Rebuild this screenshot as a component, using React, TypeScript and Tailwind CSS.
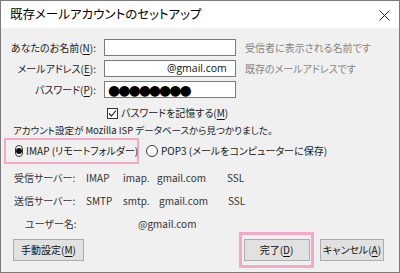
import React from 'react';

const Underline: React.FC<{ ch: string }> = ({ ch }) => <span className="underline underline-offset-2">{ch}</span>;

const Button: React.FC<{ className?: string; children: React.ReactNode }> = ({ className = '', children }) => (
  <div
    className={`h-[22px] flex items-center justify-center bg-[#e1e1e1] border border-[#adadad] text-[10px] text-[#111] whitespace-nowrap ${className}`}
  >
    {children}
  </div>
);

export default function App() {
  return (
    <div className="w-[400px] h-[273px] bg-[#f0f0f0] border border-[#7a7a7a] flex flex-col font-['Noto_Sans_CJK_JP',sans-serif] text-[10px] text-[#1a1a1a] [font-feature-settings:'palt'] leading-none overflow-hidden whitespace-nowrap">
      {/* Title bar */}
      <div className="h-[27px] bg-white flex items-center justify-between pl-[9px] pr-[9px] shrink-0">
        <span className="text-[12.5px] text-[#000] leading-none">既存メールアカウントのセットアップ</span>
        <svg width="11" height="11" viewBox="0 0 11 11" className="mt-[1px]">
          <path d="M0.5 0.5L10.5 10.5M10.5 0.5L0.5 10.5" stroke="#222" strokeWidth="1" />
        </svg>
      </div>

      {/* Form */}
      <div className="grid grid-cols-[95px_132px_auto] grid-rows-[17px_17px_17px] gap-x-[8px] gap-y-[4px] mt-[11px] items-center">
        <div className="text-right">あなたのお名前(<Underline ch="N" />):</div>
        <div className="h-[17px] bg-white border border-[#7a7a7a]" />
        <div className="pl-[1px] text-[#858585]">受信者に表示される名前です</div>

        <div className="text-right">メールアドレス(<Underline ch="E" />):</div>
        <div className="h-[17px] bg-white border border-[#7a7a7a] flex items-center pl-[62px] text-[10.5px] text-[#111] font-['Open_Sans',sans-serif]">
          @gmail.com
        </div>
        <div className="pl-[1px] text-[#858585]">既存のメールアドレスです</div>

        <div className="text-right">パスワード(<Underline ch="P" />):</div>
        <div className="h-[17px] bg-white border border-[#7a7a7a] flex items-center pl-[3px] text-[14px] tracking-[-2px] text-black font-['DejaVu_Sans',sans-serif]">
          ●●●●●●●●
        </div>
        <div />
      </div>

      {/* Remember password */}
      <div className="flex items-center ml-[106px] mt-[9px] h-[12px]">
        <div className="w-[11px] h-[11px] border border-[#333] bg-white flex items-center justify-center">
          <svg width="9" height="9" viewBox="0 0 9 9">
            <path d="M1 4.5L3.5 7L8 1.5" stroke="#111" strokeWidth="1.1" fill="none" />
          </svg>
        </div>
        <span className="ml-[3px]">パスワードを記憶する(<Underline ch="M" />)</span>
      </div>

      {/* Info */}
      <div className="ml-[12px] mt-[7px] h-[10px] text-[9.5px]">
        アカウント設定が Mozilla ISP データベースから見つかりました。
      </div>

      {/* Protocol radio */}
      <div className="flex items-center mt-[2px] h-[26px]">
        <div className="ml-[3px] h-[26px] w-[135px] border-2 border-[#f5a9c9] flex items-center pl-[9px]">
          <div className="w-[12px] h-[12px] rounded-full border border-[#333] bg-white flex items-center justify-center">
            <div className="w-[6px] h-[6px] rounded-full bg-[#111]" />
          </div>
          <span className="ml-[3px]">IMAP (リモートフォルダー)</span>
        </div>
        <div className="ml-[7px] flex items-center">
          <div className="w-[12px] h-[12px] rounded-full border border-[#333] bg-white" />
          <span className="ml-[3px]">POP3 (メールをコンピューターに保存)</span>
        </div>
      </div>

      {/* Servers */}
      <div className="flex flex-col gap-[13px] mt-[9px] text-[#333]">
        <div className="flex items-center h-[10px]">
          <span className="ml-[13px] w-[72px]">受信サーバー:</span>
          <span className="w-[37px]">IMAP</span>
          <span className="w-[34px]">imap.</span>
          <span className="w-[70px]">gmail.com</span>
          <span>SSL</span>
        </div>
        <div className="flex items-center h-[10px]">
          <span className="ml-[13px] w-[72px]">送信サーバー:</span>
          <span className="w-[37px]">SMTP</span>
          <span className="w-[36px]">smtp.</span>
          <span className="w-[69px]">gmail.com</span>
          <span>SSL</span>
        </div>
        <div className="flex items-center h-[10px]">
          <span className="ml-[24px] w-[113px]">ユーザー名:</span>
          <span>@gmail.com</span>
        </div>
      </div>

      {/* Buttons */}
      <div className="flex items-center mt-[3px] h-[36px]">
        <Button className="ml-[12px] w-[71px]">
          手動設定(<Underline ch="M" />)
        </Button>
        <div className="ml-[155px] w-[75px] h-[36px] border-[3px] border-[#f5a9c9] flex items-center justify-center">
          <Button className="w-[66px]">
            完了(<Underline ch="D" />)
          </Button>
        </div>
        <Button className="ml-[6px] w-[64px]">
          キャンセル(<Underline ch="A" />)
        </Button>
      </div>
    </div>
  );
}
